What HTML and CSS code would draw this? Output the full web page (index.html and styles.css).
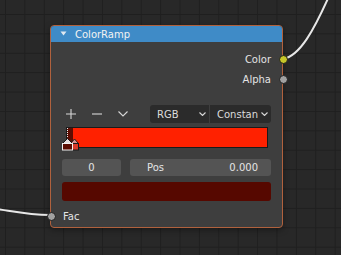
FILE: index.html
```html
<!DOCTYPE html>
<html lang="en">
<head>
  <meta charset="UTF-8">
  <title>ColorRamp Node</title>
  <link rel="stylesheet" href="styles.css">
</head>
<body>

  <div class="editor">
    <!-- Node links -->
    <svg class="links" width="341" height="255" viewBox="0 0 341 255">
      <path d="M50 215 C 22 215, 12 210, -40 204" />
      <path d="M283 59 C 300 56, 314 30, 330 -6" />
    </svg>

    <!-- ColorRamp node -->
    <div class="node">
      <div class="node-header">
        <svg class="collapse" width="7" height="6" viewBox="0 0 7 6"><path d="M0.5 0.5 H6.5 L3.5 4.5 Z" /></svg>
        <span>ColorRamp</span>
      </div>

      <div class="node-body">
        <div class="outputs">
          <div class="socket-row out"><span>Color</span><i class="socket color"></i></div>
          <div class="socket-row out"><span>Alpha</span><i class="socket value"></i></div>
        </div>

        <div class="ramp-tools">
          <span class="tool">
            <svg width="10" height="10" viewBox="0 0 10 10"><path d="M5 0 V10 M0 5 H10" /></svg>
          </span>
          <span class="tool">
            <svg width="10" height="10" viewBox="0 0 10 10"><path d="M0 5 H10" /></svg>
          </span>
          <span class="tool">
            <svg width="10" height="6" viewBox="0 0 10 6"><path d="M0.5 0.5 L5 5 L9.5 0.5" /></svg>
          </span>
          <div class="menus">
            <div class="menu">
              <span>RGB</span>
              <svg width="7" height="4" viewBox="0 0 7 4"><path d="M0.5 0.5 L3.5 3.5 L6.5 0.5" /></svg>
            </div>
            <div class="menu">
              <span>Constan</span>
              <svg width="7" height="4" viewBox="0 0 7 4"><path d="M0.5 0.5 L3.5 3.5 L6.5 0.5" /></svg>
            </div>
          </div>
        </div>

        <div class="ramp">
          <div class="ramp-bar"><div class="ramp-dark"></div></div>
          <svg class="stops" width="20" height="24" viewBox="0 0 20 24">
            <line class="stop-line" x1="6.5" y1="1" x2="6.5" y2="11" />
            <path class="stop-top b" d="M9.5 16.5 L13.5 12 L17.5 16.5 Z" />
            <rect class="stop-box b" x="9.5" y="16.5" width="8" height="6.5" />
            <path class="stop-top a" d="M1.5 16.5 L6.5 11.5 L11.5 16.5 Z" />
            <rect class="stop-box a" x="1.5" y="16.5" width="10" height="6.5" />
          </svg>
        </div>

        <div class="fields">
          <div class="field index">0</div>
          <div class="field pos"><span>Pos</span><span>0.000</span></div>
        </div>

        <div class="swatch"></div>

        <div class="socket-row in"><i class="socket value"></i><span>Fac</span></div>
      </div>
    </div>
  </div>

</body>
</html>
```

FILE: styles.css
```css
/* General Styling */
body {
  margin: 0;
  padding: 0;
  font-family: "DejaVu Sans", "Liberation Sans", sans-serif;
  font-size: 10px;
  color: #e4e4e4;
}

/* Node editor canvas */
.editor {
  position: relative;
  width: 341px;
  height: 255px;
  overflow: hidden;
  background-color: #282828;
  background-image:
    linear-gradient(#1f1f1f 1px, transparent 1px),
    linear-gradient(90deg, #1f1f1f 1px, transparent 1px);
  background-size: 19.4px 19.4px;
  background-position: 5px 14px;
}

.links {
  position: absolute;
  left: 0;
  top: 0;
}

.links path {
  fill: none;
  stroke: #e8e8e8;
  stroke-width: 2;
}

/* Node */
.node {
  position: absolute;
  left: 50px;
  top: 25px;
  width: 233px;
  box-sizing: border-box;
  background-color: #3e3e3e;
  border: 1px solid #b0613d;
  border-radius: 4px;
  box-shadow: 0 2px 6px rgba(0, 0, 0, 0.35);
}

.node-header {
  height: 16px;
  display: flex;
  align-items: center;
  gap: 8px;
  padding-left: 9px;
  background-color: #3f8bc7;
  border-radius: 3px 3px 0 0;
  color: #f2f2f2;
}

.collapse path {
  fill: #e0e8f0;
}

.node-body {
  padding: 7px 11px 1px 11px;
  display: flex;
  flex-direction: column;
}

/* Sockets */
.socket-row {
  position: relative;
  height: 20px;
  display: flex;
  align-items: center;
}

.socket-row.out {
  justify-content: flex-end;
}

.socket-row.in {
  margin-top: 5px;
  padding-left: 1px;
}

.socket {
  position: absolute;
  top: 50%;
  width: 9px;
  height: 9px;
  margin-top: -4.5px;
  box-sizing: border-box;
  border-radius: 50%;
  border: 1px solid #1c1c1c;
}

.out .socket {
  right: -16.5px;
}

.in .socket {
  left: -15.5px;
}

.socket.color {
  background-color: #c7c729;
}

.socket.value {
  background-color: #a1a1a1;
}

/* Ramp tools row */
.ramp-tools {
  margin-top: 16px;
  height: 18px;
  display: flex;
  align-items: center;
  gap: 10px;
  padding-left: 1px;
}

.tool {
  width: 16px;
  display: flex;
  justify-content: center;
}

.tool path,
.menu path {
  fill: none;
  stroke: #d8d8d8;
  stroke-width: 1.1;
}

.menus {
  margin-left: auto;
  display: flex;
  gap: 1px;
  height: 18px;
}

.menu {
  display: flex;
  align-items: center;
  justify-content: space-between;
  background-color: #2b2b2b;
  padding: 0 3px 0 7px;
  color: #dcdcdc;
}

.menu:first-child {
  width: 59px;
  box-sizing: border-box;
  border-radius: 3px 0 0 3px;
}

.menu:last-child {
  width: 61px;
  box-sizing: border-box;
  border-radius: 0 3px 3px 0;
  padding-left: 7px;
}

/* Color ramp */
.ramp {
  position: relative;
  margin-top: 4px;
  height: 23px;
}

.ramp-bar {
  margin: 0 3px 0 4px;
  height: 21px;
  box-sizing: border-box;
  border: 1px solid #1a1a1a;
  background-color: #ff2100;
  display: flex;
}

.ramp-dark {
  width: 6px;
  background-color: #5c0d02;
}

.stops {
  position: absolute;
  left: -1px;
  top: 0;
}

.stop-line {
  stroke: #f0f0f0;
  stroke-width: 1;
  stroke-dasharray: 1 1;
}

.stop-top.a {
  fill: #e6dede;
  stroke: #1a1a1a;
  stroke-width: 1;
}

.stop-box.a {
  fill: #5c0d02;
  stroke: #f0f0f0;
  stroke-width: 1;
}

.stop-top.b {
  fill: #d89090;
  stroke: #1a1a1a;
  stroke-width: 1;
}

.stop-box.b {
  fill: #d83a2a;
  stroke: #1a1a1a;
  stroke-width: 1;
}

/* Value fields */
.fields {
  margin-top: 9px;
  display: flex;
  gap: 9px;
  height: 17px;
}

.field {
  background-color: #545454;
  border-radius: 3px;
  display: flex;
  align-items: center;
  color: #e4e4e4;
}

.field.index {
  width: 59px;
  justify-content: center;
}

.field.pos {
  flex: 1;
  justify-content: space-between;
  padding: 0 13px 0 17px;
}

.swatch {
  margin-top: 6px;
  height: 19px;
  background-color: #560800;
  border-radius: 3px;
}
```
